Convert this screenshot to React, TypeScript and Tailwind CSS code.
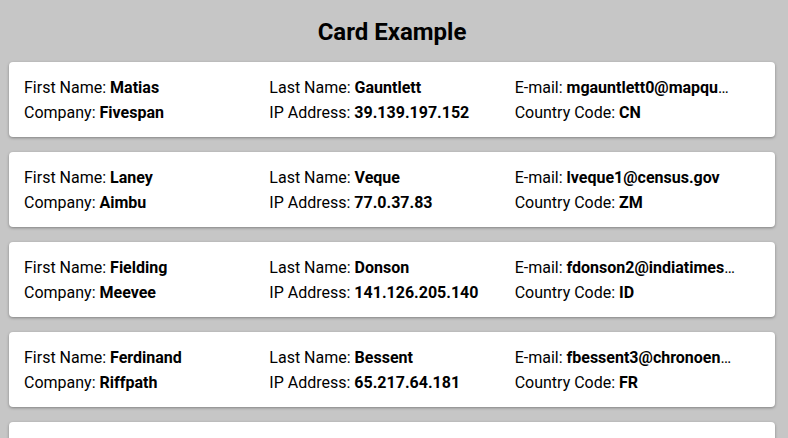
import React from 'react';

type Person = {
  firstName: string;
  lastName: string;
  email: string;
  company: string;
  ip: string;
  country: string;
};

const people: Person[] = [
  { firstName: 'Matias', lastName: 'Gauntlett', email: 'mgauntlett0@mapquest.com', company: 'Fivespan', ip: '39.139.197.152', country: 'CN' },
  { firstName: 'Laney', lastName: 'Veque', email: 'lveque1@census.gov', company: 'Aimbu', ip: '77.0.37.83', country: 'ZM' },
  { firstName: 'Fielding', lastName: 'Donson', email: 'fdonson2@indiatimes.com', company: 'Meevee', ip: '141.126.205.140', country: 'ID' },
  { firstName: 'Ferdinand', lastName: 'Bessent', email: 'fbessent3@chronoengine.com', company: 'Riffpath', ip: '65.217.64.181', country: 'FR' },
  { firstName: 'Rodie', lastName: 'Tarn', email: 'rtarn4@tiny.cc', company: 'Skinix', ip: '12.45.98.3', country: 'US' },
];

const Field: React.FC<{ label: string; value: string }> = ({ label, value }) => (
  <div className="truncate pr-[23px]">
    {label}: <b className="font-bold">{value}</b>
  </div>
);

const App: React.FC = () => {
  return (
    <div
      className="min-h-screen bg-[#c6c6c6] text-black"
      style={{ fontFamily: 'Roboto, "Liberation Sans", sans-serif' }}
    >
      <div className="ml-[9px] w-[766px]">
        <h1 className="pt-[16px] pb-[13px] text-center text-[24px] leading-[33px] font-bold">
          Card Example
        </h1>
        <div className="flex flex-col gap-[15px]">
          {people.map((p) => (
            <div
              key={p.email}
              className="grid grid-cols-3 rounded-[4px] bg-white px-[15px] pt-[13px] pb-[12px] text-[16px] leading-[25px] shadow-[0_1px_3px_rgba(0,0,0,0.35)]"
            >
              <Field label="First Name" value={p.firstName} />
              <Field label="Last Name" value={p.lastName} />
              <Field label="E-mail" value={p.email} />
              <Field label="Company" value={p.company} />
              <Field label="IP Address" value={p.ip} />
              <Field label="Country Code" value={p.country} />
            </div>
          ))}
        </div>
      </div>
    </div>
  );
};

export default App;
